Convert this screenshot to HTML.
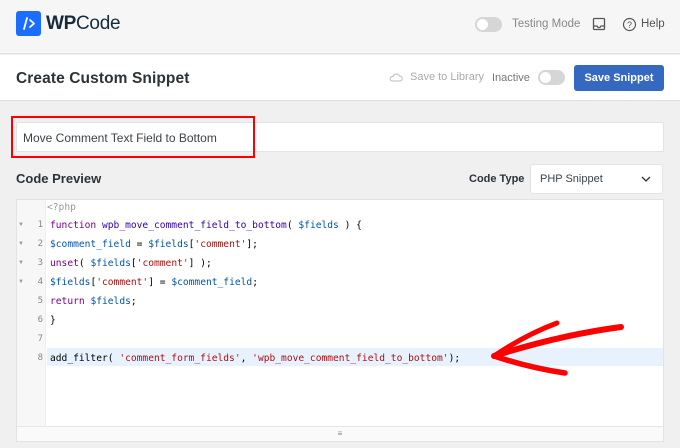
<!DOCTYPE html>
<html><head><meta charset="utf-8"><style>
*{margin:0;padding:0;box-sizing:border-box}
body{width:680px;height:448px;overflow:hidden;background:#f0f0f1;font-family:"Liberation Sans",sans-serif;position:relative}
.hdr{position:absolute;left:0;top:0;width:680px;height:54px;background:#f6f6f6;border-bottom:1px solid #e2e2e2}
.bar{position:absolute;left:0;top:55px;width:680px;height:46px;background:#fff;border-bottom:1px solid #e0e0e0}
.abs{position:absolute}
.tog{position:absolute;width:27px;height:15px;border-radius:8px;background:#d6d6d6}
.tog:after{content:"";position:absolute;left:2px;top:2px;width:11px;height:11px;border-radius:50%;background:#fff}
.code{font-family:"DejaVu Sans Mono","Liberation Mono",monospace;font-size:9.6px;white-space:pre}
.ln{position:absolute;left:16px;width:30px;text-align:right;padding-right:3px;color:#888;font-family:"DejaVu Sans Mono",monospace;font-size:9px}
.fd{position:absolute;left:18px;color:#999;font-size:6px}
.k{color:#708}.v{color:#05a}.s{color:#a11}.f{color:#30a}
</style></head><body>
<div class="hdr"></div>
<div class="abs" style="left:16px;top:11px;width:25px;height:25px;background:#1a6dff;border-radius:3px"></div>
<svg class="abs" style="left:16px;top:11px" width="25" height="25"><path d="M11 7 L8 18 M14 9 L18 12.5 L14 16" stroke="#fff" stroke-width="1.8" fill="none" stroke-linecap="round" stroke-linejoin="round"/></svg>
<div class="abs" style="left:46px;top:13px;font-size:19px;color:#172b3a;letter-spacing:-0.3px"><b>WP</b>Code</div>
<div class="tog" style="left:475px;top:17px"></div>
<div class="abs" style="left:512px;top:18px;font-size:11.5px;color:#888">Testing Mode</div>
<svg class="abs" style="left:592px;top:17px" width="14" height="14"><rect x="1.5" y="1.5" width="11" height="11" rx="1" fill="none" stroke="#555" stroke-width="1.3"/><path d="M1.5 9 H5 L6 10.5 H8 L9 9 H12.5" fill="none" stroke="#555" stroke-width="1.2"/></svg>
<svg class="abs" style="left:622px;top:17px" width="15" height="15"><circle cx="7.5" cy="7.5" r="6" fill="none" stroke="#555" stroke-width="1.2"/><text x="7.5" y="11" font-size="9" text-anchor="middle" fill="#555" font-family="Liberation Sans">?</text></svg>
<div class="abs" style="left:641px;top:18px;font-size:11.5px;color:#555">Help</div>
<div class="bar"></div>
<div class="abs" style="left:16px;top:70px;font-size:15.5px;color:#2c3338;font-weight:bold;letter-spacing:0.1px">Create Custom Snippet</div>
<svg class="abs" style="left:389px;top:72px" width="14" height="10"><path d="M3 9 H11 A2.5 2.5 0 0 0 10.5 4 A3.5 3.5 0 0 0 4 4.5 A2.3 2.3 0 0 0 3 9Z" fill="none" stroke="#bbb" stroke-width="1"/></svg>
<div class="abs" style="left:410px;top:71px;font-size:11px;color:#aaa">Save to Library</div>
<div class="abs" style="left:492px;top:72px;font-size:11px;color:#777">Inactive</div>
<div class="tog" style="left:538px;top:70px"></div>
<div class="abs" style="left:574px;top:65px;width:90px;height:26px;background:#3568c0;border-radius:3px;color:#fff;font-size:11px;font-weight:bold;text-align:center;line-height:26px">Save Snippet</div>
<div class="abs" style="left:16px;top:122px;width:648px;height:30px;background:#fff;border:1px solid #e3e3e3;border-radius:2px"></div>
<div class="abs" style="left:11px;top:116px;width:244px;height:42px;border:2px solid #f00"></div>
<div class="abs" style="left:23px;top:131px;font-size:12px;color:#3c434a">Move Comment Text Field to Bottom</div>
<div class="abs" style="left:16px;top:171px;font-size:13px;color:#2c3338;font-weight:bold">Code Preview</div>
<div class="abs" style="left:469px;top:173px;font-size:11px;color:#2c3338;font-weight:bold">Code Type</div>
<div class="abs" style="left:530px;top:164px;width:133px;height:30px;background:#fff;border:1px solid #e3e3e3;border-radius:3px"></div>
<div class="abs" style="left:540px;top:173px;font-size:11px;color:#3c434a">PHP Snippet</div>
<svg class="abs" style="left:641px;top:176px" width="10" height="7"><path d="M1 1 L5 5 L9 1" fill="none" stroke="#333" stroke-width="1.3"/></svg>
<div class="abs" style="left:16px;top:199px;width:648px;height:243px;background:#fff;border:1px solid #e3e3e3"></div>
<div class="abs" style="left:17px;top:200px;width:29px;height:226px;background:#f7f7f7;border-right:1px solid #eee"></div>
<div class="abs" style="left:47px;top:348px;width:616px;height:18px;background:#e8f2ff"></div>
<div class="abs" style="left:17px;top:426px;width:646px;height:15px;background:#fafafa;border-top:1px solid #e6e6e6;text-align:center;font-size:8px;color:#888;line-height:14px">≡</div>
<div class="abs code" style="left:47px;top:202px;color:#999">&lt;?php</div>
<div class="abs code" style="left:50px;top:216px;line-height:19px"><span class="k">function</span> <span class="f">wpb_move_comment_field_to_bottom</span>( <span class="v">$fields</span> ) {
<span class="v">$comment_field</span> = <span class="v">$fields</span>[<span class="s">'comment'</span>];
<span class="k">unset</span>( <span class="v">$fields</span>[<span class="s">'comment'</span>] );
<span class="v">$fields</span>[<span class="s">'comment'</span>] = <span class="v">$comment_field</span>;
<span class="k">return</span> <span class="v">$fields</span>;
}

add_filter( <span class="s">'comment_form_fields'</span>, <span class="s">'wpb_move_comment_field_to_bottom'</span>);</div>
<div class="ln" style="top:216px;line-height:19px;white-space:pre">1
2
3
4
5
6
7
8</div>
<div class="fd" style="top:216px;line-height:19px;white-space:pre">▼
▼
▼
▼</div>
<svg class="abs" style="left:0;top:0" width="680" height="448"><g stroke="#f00" stroke-linecap="round" fill="none"><path d="M494 356 Q560 335 621 327" stroke-width="6"/><path d="M494 356 Q525 335 557 323" stroke-width="5"/><path d="M494 356 Q530 368 565 373" stroke-width="5.5"/></g></svg>
</body></html>
